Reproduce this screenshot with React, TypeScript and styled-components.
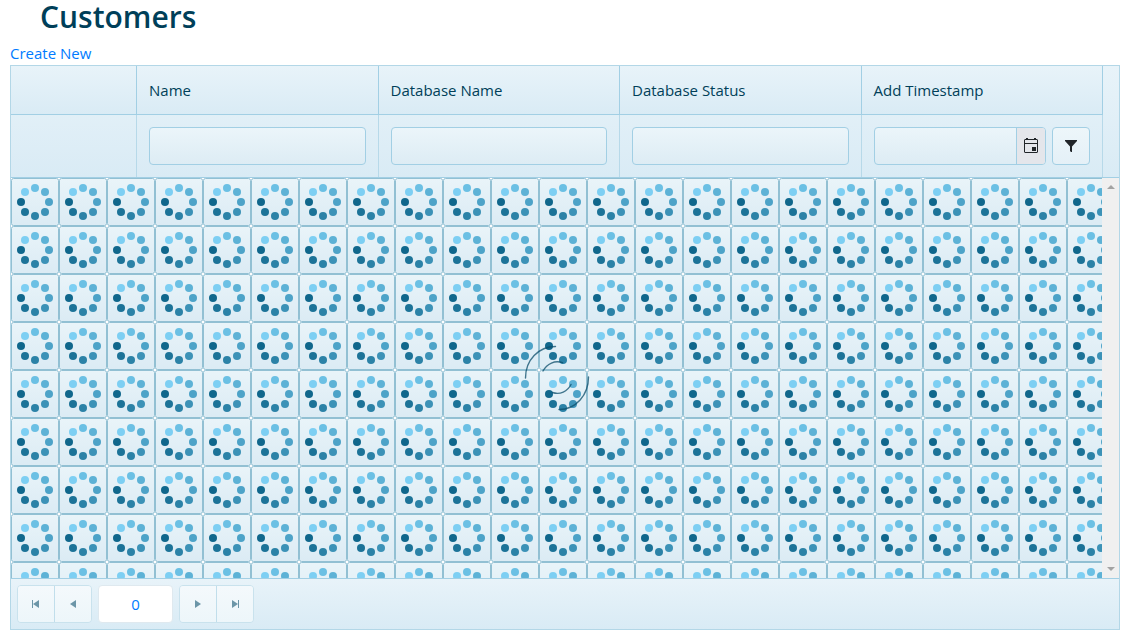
import React from "react";
import styled, { createGlobalStyle } from "styled-components";

const GlobalStyle = createGlobalStyle`
  *, *::before, *::after { box-sizing: border-box; }
  body {
    margin: 0;
    background: #fff;
    color: #003f59;
    font-family: "Segoe UI", "Open Sans", "Noto Sans", sans-serif;
    font-size: 15px;
    line-height: 24px;
  }
`;

const Page = styled.main`
  padding: 0 21px 6px 10px;
`;

const Title = styled.h1`
  margin: 0;
  padding: 0 30px 7px;
  font-size: 30px;
  font-weight: 600;
  line-height: 34px;
`;

const CreateLink = styled.a`
  display: block;
  width: max-content;
  color: #007bff;
  text-decoration: none;
`;

const Grid = styled.section`
  border: 1px solid #b3d7e7;
`;

const GridHeader = styled.div`
  padding-right: 16px;
  border-bottom: 1px solid #a2cfe4;
  background: linear-gradient(#e8f3f9, #d9ebf5);
`;

const HeaderTable = styled.table`
  width: 100%;
  table-layout: fixed;
  border-collapse: separate;
  border-spacing: 0;
`;

const CommandCol = styled.col`
  width: 126px;
`;

const HeaderRow = styled.tr`
  background: linear-gradient(#e8f3f9, #d9ebf5);
`;

const HeaderCell = styled.th`
  height: 49px;
  padding: 0 12px;
  border-right: 1px solid #a2cfe4;
  border-bottom: 1px solid #a2cfe4;
  font-weight: 400;
  text-align: left;
`;

const FilterCell = styled.td`
  height: 62px;
  padding: 12px;
  border-right: 1px solid #b7d9e9;
`;

const FilterGroup = styled.div`
  display: flex;
  gap: 6px;
`;

const FieldFrame = styled.div`
  display: flex;
  flex: 1;
  min-width: 0;
  height: 38px;
  overflow: hidden;
  border: 1px solid #a2cfe4;
  border-radius: 4px;
  background: linear-gradient(#ebf5fa, #ddecf4);
`;

const TextInput = styled.input`
  flex: 1;
  min-width: 0;
  padding: 0 8px;
  border: 0;
  background: transparent;
  color: inherit;
  font: inherit;
`;

const CalendarButton = styled.button`
  display: grid;
  place-items: center;
  width: 29px;
  padding: 0;
  border: 0;
  border-left: 1px solid #a2cfe4;
  background: #e4e6eb;
  color: #212529;
`;

const FilterButton = styled.button`
  display: grid;
  place-items: center;
  width: 38px;
  height: 38px;
  padding: 0;
  border: 1px solid #a2cfe4;
  border-radius: 4px;
  background: linear-gradient(#edf6fa, #e4f0f7);
  color: #212529;
`;

const GridBody = styled.div`
  position: relative;
  display: flex;
  height: 400px;
`;

const Tiles = styled.svg`
  display: block;
  flex: 1;
  min-width: 0;
  height: 100%;
`;

const LoaderOverlay = styled.div`
  position: absolute;
  inset: 0 17px 0 0;
  display: grid;
  place-items: center;
`;

const ScrollTrack = styled.div`
  display: flex;
  flex-direction: column;
  justify-content: space-between;
  align-items: center;
  width: 17px;
  padding: 7px 0;
  background: #f0f0f0;
  color: #a3a3a3;
`;

const Pager = styled.nav`
  display: flex;
  align-items: center;
  gap: 6px;
  height: 51px;
  padding: 0 6px;
  border-top: 1px solid #a2cfe4;
  background: linear-gradient(#e8f3f9, #d9ebf5);
`;

const PagerGroup = styled.div`
  display: flex;
  overflow: hidden;
  border: 1px solid #c9e2ed;
  border-radius: 4px;
`;

const PagerButton = styled.button`
  display: grid;
  place-items: center;
  width: 36px;
  height: 36px;
  padding: 0;
  border: 0;
  background: linear-gradient(#f4f9fc, #edf6fa);
  color: #6c96a8;

  & + & {
    width: 37px;
    border-left: 1px solid #c1deeb;
  }
`;

const PageInput = styled.input`
  width: 75px;
  height: 38px;
  padding: 0;
  border: 1px solid #dfe9ef;
  border-radius: 4px;
  background: #fff;
  color: #007bff;
  font: inherit;
  text-align: center;
`;

const dots: [number, number, string][] = [
  [14, 14, "#7dcff3"],
  [24, 10, "#6bc0e4"],
  [34, 14, "#5db2d6"],
  [38, 24, "#4da3c8"],
  [34, 34, "#3c92b7"],
  [24, 38, "#2b82a7"],
  [14, 34, "#1c7398"],
  [10, 24, "#10678c"],
];

function SpinnerTiles() {
  return (
    <Tiles aria-hidden="true">
      <defs>
        <linearGradient id="tileFill" x1="0" y1="0" x2="0" y2="1">
          <stop offset="0" stopColor="#e9f4f9" />
          <stop offset="1" stopColor="#dbebf4" />
        </linearGradient>
        <pattern id="tile" width="48" height="48" patternUnits="userSpaceOnUse">
          <rect width="48" height="48" fill="#fff" />
          <rect x="0.5" y="0.5" width="47" height="47" rx="2" fill="url(#tileFill)" stroke="#92c0d3" />
          {dots.map(([x, y, color]) => (
            <circle key={color} cx={x} cy={y} r="4" fill={color} />
          ))}
        </pattern>
      </defs>
      <rect width="100%" height="100%" fill="url(#tile)" />
    </Tiles>
  );
}

function Loader() {
  return (
    <svg width="66" height="66" viewBox="0 0 66 66" fill="none" stroke="#0b4d6a" strokeWidth="1.4" strokeLinecap="round" opacity="0.75" role="img" aria-label="Loading">
      <path d="M1.5 33C1.500 15 14.500 1.500 31.500 1.500" />
      <path d="M64.500 32C64.500 50 52 64.500 35 64.500" />
      <path d="M19 26C23 18.500 31 15 38.500 17.700" />
      <path d="M47 39.500C43.500 46.500 36 50 28.500 47.500" />
    </svg>
  );
}

function CalendarIcon() {
  return (
    <svg width="16" height="16" viewBox="0 0 16 16" aria-hidden="true">
      <path fill="currentColor" fillRule="evenodd" d="M3 0h2v1h6V0h2v1h1l1 1v12l-1 1H2l-1-1V2l1-1h1zM2 2v3h12V2zM2 6v8h12V6z" />
      <path fill="currentColor" d="M3 1h2v1H3zM11 1h2v1h-2zM9 9h4v4H9z" />
    </svg>
  );
}

function FunnelIcon() {
  return (
    <svg width="14" height="14" viewBox="0 0 14 14" aria-hidden="true">
      <path fill="currentColor" d="M1 1h12v1L8 7.500V13H7l-1-1V7.500L1 2z" />
    </svg>
  );
}

function Arrow({ direction, end = false }: { direction: "left" | "right"; end?: boolean }) {
  return (
    <svg width="10" height="10" viewBox="0 0 10 10" fill="currentColor" aria-hidden="true">
      <g transform={direction === "right" ? "matrix(-1 0 0 1 10 0)" : undefined}>
        {end && <path d="M1 1h1v8H1z" />}
        <path d="M8 1v8L2 5z" />
      </g>
    </svg>
  );
}

function ScrollArrow({ down = false }: { down?: boolean }) {
  return (
    <svg width="8" height="4" viewBox="0 0 8 4" fill="currentColor" aria-hidden="true">
      <path d={down ? "M0 0h8L4 4z" : "M0 4h8L4 0z"} />
    </svg>
  );
}

const textColumns = ["Name", "Database Name", "Database Status"];

export default function App() {
  return (
    <>
      <GlobalStyle />
      <Page>
        <Title>Customers</Title>
        <CreateLink href="#create">Create New</CreateLink>
        <Grid aria-label="Customers">
          <GridHeader>
            <HeaderTable>
              <colgroup>
                <CommandCol />
                <col />
                <col />
                <col />
                <col />
              </colgroup>
              <thead>
                <HeaderRow>
                  <HeaderCell />
                  {textColumns.map((name) => (
                    <HeaderCell key={name} scope="col">{name}</HeaderCell>
                  ))}
                  <HeaderCell scope="col">Add Timestamp</HeaderCell>
                </HeaderRow>
                <tr>
                  <FilterCell />
                  {textColumns.map((name) => (
                    <FilterCell key={name}>
                      <FieldFrame>
                        <TextInput aria-label={name} />
                      </FieldFrame>
                    </FilterCell>
                  ))}
                  <FilterCell>
                    <FilterGroup>
                      <FieldFrame>
                        <TextInput aria-label="Add Timestamp" />
                        <CalendarButton type="button" aria-label="Open calendar">
                          <CalendarIcon />
                        </CalendarButton>
                      </FieldFrame>
                      <FilterButton type="button" aria-label="Filter">
                        <FunnelIcon />
                      </FilterButton>
                    </FilterGroup>
                  </FilterCell>
                </tr>
              </thead>
            </HeaderTable>
          </GridHeader>
          <GridBody>
            <SpinnerTiles />
            <ScrollTrack>
              <ScrollArrow />
              <ScrollArrow down />
            </ScrollTrack>
            <LoaderOverlay>
              <Loader />
            </LoaderOverlay>
          </GridBody>
          <Pager aria-label="Pages">
            <PagerGroup>
              <PagerButton type="button" aria-label="First page"><Arrow direction="left" end /></PagerButton>
              <PagerButton type="button" aria-label="Previous page"><Arrow direction="left" /></PagerButton>
            </PagerGroup>
            <PageInput aria-label="Page" defaultValue="0" />
            <PagerGroup>
              <PagerButton type="button" aria-label="Next page"><Arrow direction="right" /></PagerButton>
              <PagerButton type="button" aria-label="Last page"><Arrow direction="right" end /></PagerButton>
            </PagerGroup>
          </Pager>
        </Grid>
      </Page>
    </>
  );
}
